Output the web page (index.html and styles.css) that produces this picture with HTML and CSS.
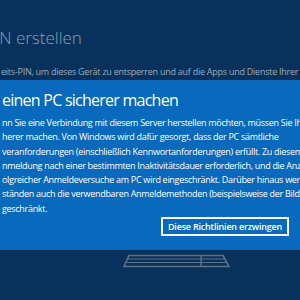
FILE: index.html
```html
<!DOCTYPE html>
<html lang="de">
<head>
    <meta charset="utf-8" />
    <title>PIN erstellen</title>
    <link rel="stylesheet" href="styles.css">
</head>
<body>
    <header class="kopf">
        <h1 class="kopf_titel">PIN erstellen</h1>
        <p class="kopf_text">eits-PIN, um dieses Gerät zu entsperren und auf die Apps und Dienste Ihrer</p>
    </header>

    <main class="hinweis">
        <h2 class="hinweis_titel">einen PC sicherer machen</h2>
        <div class="hinweis_text">
            <span>nn Sie eine Verbindung mit diesem Server herstellen möchten, müssen Sie Ihren</span>
            <span>herer machen. Von Windows wird dafür gesorgt, dass der PC sämtliche</span>
            <span>veranforderungen (einschließlich Kennwortanforderungen) erfüllt. Zu diesem</span>
            <span>nmeldung nach einer bestimmten Inaktivitätsdauer erforderlich, und die Anzahl</span>
            <span>olgreicher Anmeldeversuche am PC wird eingeschränkt. Darüber hinaus werden</span>
            <span>ständen auch die verwendbaren Anmeldemethoden (beispielsweise der Bildcode)</span>
            <span>geschränkt.</span>
        </div>
        <div class="hinweis_aktionen">
            <button class="knopf">Diese Richtlinien erzwingen</button>
        </div>
    </main>

    <footer class="fuss">
        <svg class="tastatur" width="108" height="14" viewBox="0 0 108 14">
            <path d="M6 1.5 H100 L106 12.5 H1 Z" fill="none" stroke="#5d7189" stroke-width="1.6"/>
            <path d="M5 5 H101 M3.5 8.5 H103" stroke="#5d7189" stroke-width="1.2"/>
            <path d="M78 1.5 V12.5" stroke="#5d7189" stroke-width="1.4"/>
        </svg>
    </footer>
</body>
</html>
```

FILE: styles.css
```css
* {
    padding: 0;
    margin: 0;
    box-sizing: border-box;
}

body {
    width: 300px;
    height: 300px;
    overflow: hidden;
    font-family: "Open Sans", "Noto Sans", sans-serif;
    background-color: #08325b;
    color: #fff;
}

.kopf {
    height: 80px;
    padding-top: 26px;
    overflow: hidden;
}

.kopf_titel {
    margin-left: -15px;
    font-size: 17px;
    font-weight: 300;
    line-height: 24px;
    color: #8a9fb6;
    white-space: nowrap;
}

.kopf_text {
    margin-top: 16px;
    padding-left: 1px;
    font-size: 9px;
    letter-spacing: -0.25px;
    line-height: 12px;
    color: #9aabbd;
    white-space: nowrap;
}

.hinweis {
    height: 170px;
    padding: 9px 0 0 2px;
    background-color: #0969bc;
    overflow: hidden;
}

.hinweis_titel {
    font-size: 16px;
    font-weight: 400;
    letter-spacing: -0.75px;
    line-height: 22px;
    white-space: nowrap;
}

.hinweis_text {
    display: flex;
    flex-direction: column;
    margin-top: 5px;
    font-size: 9px;
    letter-spacing: -0.3px;
    line-height: 14.3px;
    white-space: nowrap;
}

.hinweis_aktionen {
    display: flex;
    justify-content: flex-end;
    padding: 1px 11px 0 0;
}

.knopf {
    width: 128px;
    height: 19px;
    font-family: inherit;
    font-size: 9px;
    font-weight: 600;
    letter-spacing: -0.2px;
    color: #fff;
    background-color: #0969bc;
    border: 2px solid #fff;
}

.fuss {
    display: flex;
    justify-content: flex-start;
    padding: 4px 0 0 123px;
}
```
